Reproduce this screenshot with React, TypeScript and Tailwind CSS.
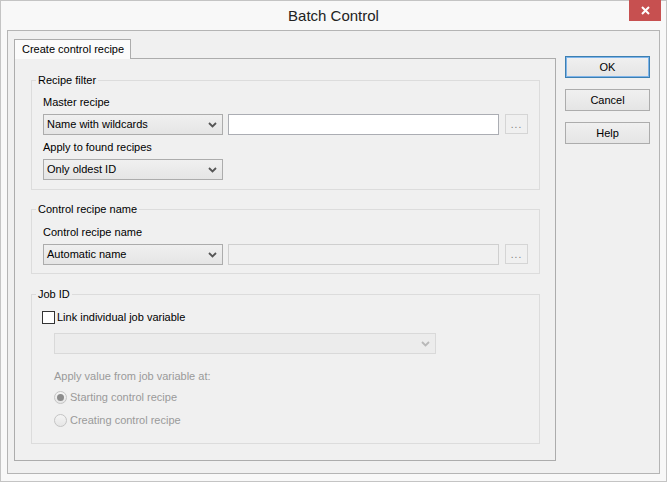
import type { ReactNode } from "react";

const Chevron = ({ disabled = false }: { disabled?: boolean }) => (
  <svg width="9" height="6" viewBox="0 0 9 6" className="shrink-0">
    <path
      d="M1 1 L4.5 4.5 L8 1"
      fill="none"
      stroke={disabled ? "#b8b8b8" : "#555555"}
      strokeWidth="1.8"
    />
  </svg>
);

const Combo = ({
  value,
  width,
  disabled = false,
}: {
  value?: string;
  width: string;
  disabled?: boolean;
}) => (
  <div
    className={`flex h-[21px] ${width} shrink-0 items-center justify-between pl-[3px] pr-[5px] ${
      disabled
        ? "border border-[#d9d9d9] bg-[#ececec]"
        : "border border-[#acacac] bg-gradient-to-b from-[#f0f0f0] to-[#e5e5e5]"
    }`}
  >
    <span>{value}</span>
    <Chevron disabled={disabled} />
  </div>
);

const Ellipsis = () => (
  <div className="ml-[6px] flex h-[20px] w-[23px] items-end justify-center border border-[#d5d5d5] bg-[#f0f0f0] pb-[3px] text-[10px] leading-[10px] tracking-[1px] text-[#7a7a7a]">
    ...
  </div>
);

const GroupBox = ({
  title,
  className,
  children,
}: {
  title: string;
  className?: string;
  children: ReactNode;
}) => (
  <div className={`border border-[#dcdcdc] pl-[11px] ${className ?? ""}`}>
    <div className="-ml-[7px] -mt-[8px] w-fit bg-[#f0f0f0] px-[2px]">{title}</div>
    {children}
  </div>
);

const Radio = ({ label, checked }: { label: string; checked?: boolean }) => (
  <div className="flex h-[15px] items-center gap-[3px] text-[#9a9a9a]">
    <span className="flex h-[13px] w-[13px] items-center justify-center rounded-full border border-[#c4c4c4] bg-gradient-to-b from-[#f4f4f4] to-[#e6e6e6]">
      {checked && <span className="h-[7px] w-[7px] rounded-full bg-[#8c8c8c]" />}
    </span>
    <span>{label}</span>
  </div>
);

const DialogButton = ({ label, focused }: { label: string; focused?: boolean }) => (
  <div
    className={`flex h-[22px] w-[85px] items-center justify-center bg-gradient-to-b from-[#f0f0f0] to-[#e5e5e5] ${
      focused ? "border border-[#3c7fb1] outline outline-1 -outline-offset-2 outline-[#7eb4ea]" : "border border-[#acacac]"
    }`}
  >
    {label}
  </div>
);

export default function App() {
  return (
    <div className="flex h-[482px] w-[667px] flex-col border border-[#c4c4c4] bg-[#f8f8f8] font-['Liberation_Sans',Arial,sans-serif] text-[11px] leading-[15px] text-black">
      <div className="relative flex h-[29px] shrink-0 items-center justify-center pb-[1px] text-[15px] text-[#222]">
        Batch Control
        <div className="absolute right-[5px] top-[-1px] flex h-[21px] w-[32px] items-center justify-center bg-[#c75050]">
          <svg width="9" height="9" viewBox="0 0 9 9">
            <path d="M1 1 L8 8 M8 1 L1 8" stroke="#fff" strokeWidth="2" />
          </svg>
        </div>
      </div>

      <div className="mx-[6px] mb-[7px] flex flex-1 border border-[#b4b4b4] bg-[#f0f0f0] pb-[12px] pl-[6px] pr-[9px] pt-[8px]">
        <div className="flex w-[542px] flex-col">
          <div className="relative z-10 -mb-px flex h-[20px] w-[117px] items-center border border-b-0 border-[#acacac] bg-[#fbfbfb] pl-[7px]">
            Create control recipe
          </div>
          <div className="flex flex-1 flex-col border border-[#acacac] bg-[#f0f0f0] pl-[16px] pr-[15px] pt-[21px]">
            <GroupBox title="Recipe filter" className="pb-[9px]">
              <div className="mt-[7px]">Master recipe</div>
              <div className="mt-[4px] flex items-start">
                <Combo value="Name with wildcards" width="w-[180px]" />
                <div className="ml-[5px] h-[21px] w-[271px] border border-[#abadb3] bg-white" />
                <Ellipsis />
              </div>
              <div className="mt-[5px]">Apply to found recipes</div>
              <div className="mt-[4px]">
                <Combo value="Only oldest ID" width="w-[180px]" />
              </div>
            </GroupBox>

            <GroupBox title="Control recipe name" className="mt-[19px] pb-[8px]">
              <div className="mt-[8px]">Control recipe name</div>
              <div className="mt-[4px] flex items-start">
                <Combo value="Automatic name" width="w-[180px]" />
                <div className="ml-[5px] h-[21px] w-[271px] border border-[#cfcfcf] bg-[#f0f0f0]" />
                <Ellipsis />
              </div>
            </GroupBox>

            <GroupBox title="Job ID" className="mt-[20px] pb-[15px]">
              <div className="mt-[8px] -ml-px flex h-[15px] items-center gap-[2px]">
                <span className="h-[13px] w-[13px] border border-[#333] bg-white" />
                <span>Link individual job variable</span>
              </div>
              <div className="pl-[11px]">
                <div className="mt-[8px]">
                  <Combo width="w-[382px]" disabled />
                </div>
                <div className="mt-[15px] text-[#9a9a9a]">Apply value from job variable at:</div>
                <div className="mt-[6px]">
                  <Radio label="Starting control recipe" checked />
                </div>
                <div className="mt-[8px]">
                  <Radio label="Creating control recipe" />
                </div>
              </div>
            </GroupBox>
          </div>
        </div>

        <div className="ml-[9px] mt-[17px] flex flex-col gap-[11px]">
          <DialogButton label="OK" focused />
          <DialogButton label="Cancel" />
          <DialogButton label="Help" />
        </div>
      </div>
    </div>
  );
}
